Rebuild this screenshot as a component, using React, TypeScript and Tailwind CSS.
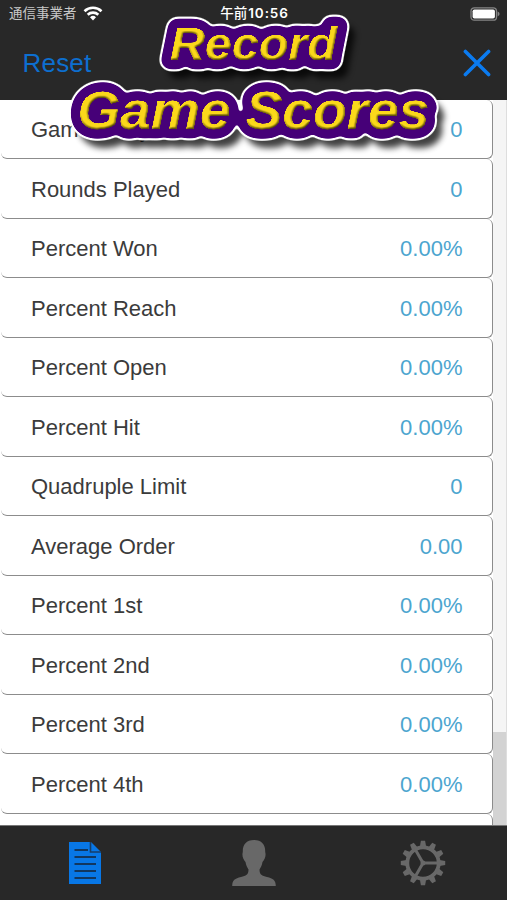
import React from "react";

const rows: [string, string][] = [
  ["Games Played", "0"],
  ["Rounds Played", "0"],
  ["Percent Won", "0.00%"],
  ["Percent Reach", "0.00%"],
  ["Percent Open", "0.00%"],
  ["Percent Hit", "0.00%"],
  ["Quadruple Limit", "0"],
  ["Average Order", "0.00"],
  ["Percent 1st", "0.00%"],
  ["Percent 2nd", "0.00%"],
  ["Percent 3rd", "0.00%"],
  ["Percent 4th", "0.00%"],
];

function StatusBar() {
  return (
    <div className="grid h-[27px] grid-cols-3 items-center pl-[9px] pr-[7px] font-['Inter','Noto_Sans_CJK_JP',sans-serif] text-[13.5px] leading-none text-white">
      <div className="flex items-center gap-[6px] whitespace-nowrap text-[#c8c8c8]">
        <span className="pt-[1px] text-[13.5px]">通信事業者</span>
        <svg width="20" height="15" viewBox="0 0 20 15" fill="none" stroke="#fff" strokeWidth="2.6">
          <path d="M1.5 5.2a12.3 12.3 0 0 1 17 0" />
          <path d="M4.7 8.7a7.7 7.7 0 0 1 10.6 0" />
          <path d="M10 14.4l-3-3.1a4.3 4.3 0 0 1 6 0z" fill="#fff" stroke="none" />
        </svg>
      </div>
      <div className="whitespace-nowrap pt-[1px] text-center font-medium">
        午前<span className="ml-[1px] font-semibold tracking-[0.9px]">10:56</span>
      </div>
      <svg className="justify-self-end" width="30" height="14" viewBox="0 0 30 14">
        <rect x="1" y="0.8" width="25.5" height="12.4" rx="3.3" fill="none" stroke="#858585" strokeWidth="1.3" />
        <rect x="2.6" y="2.4" width="22.3" height="9.2" rx="1.8" fill="#fff" />
        <path d="M27.6 4.6v4.8q2-1 2-2.4t-2-2.4" fill="#858585" />
      </svg>
    </div>
  );
}

function Banner() {
  return (
    <svg className="pointer-events-none absolute left-0 top-0 z-10" width="507" height="170" viewBox="0 0 507 170">
      <defs>
        <filter id="sticker" filterUnits="userSpaceOnUse" x="0" y="0" width="507" height="170" colorInterpolationFilters="sRGB">
          {/* drop shadow */}
          <feGaussianBlur in="SourceAlpha" stdDeviation="3.2" result="soft" />
          <feOffset in="soft" dx="7" dy="9" result="moved" />
          <feComponentTransfer in="moved" result="cast"><feFuncA type="linear" slope="0.75" /></feComponentTransfer>
          {/* thin white rim around a solid purple base */}
          <feGaussianBlur in="SourceAlpha" stdDeviation="2" result="spread" />
          <feColorMatrix in="spread" type="matrix" values="0 0 0 0 1  0 0 0 0 1  0 0 0 0 1  0 0 0 7 -0.85" result="rim" />
          <feColorMatrix in="spread" type="matrix" values="0 0 0 0 0.275  0 0 0 0 0  0 0 0 0 0.47  0 0 0 7 -3.2" result="base" />
          {/* raised yellow face */}
          <feColorMatrix in="SourceGraphic" type="matrix" values="0 0 0 0 1  0 0 0 0 0.86  0 0 0 0 0.1  0 1.15 0 0 0" result="flat" />
          <feGaussianBlur in="flat" stdDeviation="0.7" result="wide" />
          <feComponentTransfer in="wide" result="face"><feFuncA type="linear" slope="2.4" intercept="-0.4" /></feComponentTransfer>
          <feGaussianBlur in="face" stdDeviation="1.3" result="height" />
          <feDiffuseLighting in="height" surfaceScale="1.9" diffuseConstant="1.2" lightingColor="#fff" result="light">
            <feDistantLight azimuth="245" elevation="58" />
          </feDiffuseLighting>
          <feComposite in="face" in2="light" operator="arithmetic" k1="0.8" k2="0.18" result="lit" />
          <feComposite in="lit" in2="face" operator="in" result="top" />
          <feMerge>
            <feMergeNode in="cast" />
            <feMergeNode in="rim" />
            <feMergeNode in="base" />
            <feMergeNode in="top" />
          </feMerge>
        </filter>
      </defs>
      <g
        className="font-['Liberation_Sans',Arial,sans-serif] font-bold italic [paint-order:stroke]"
        fill="#ffdc1a"
        stroke="#460078"
        strokeWidth="19"
        strokeLinejoin="round"
      >
        <text x="170" y="60" fontSize="47" textLength="167" lengthAdjust="spacingAndGlyphs" filter="url(#sticker)">Record</text>
        <text x="77.5" y="128.5" fontSize="54.5" textLength="352" lengthAdjust="spacingAndGlyphs" filter="url(#sticker)">Game Scores</text>
      </g>
    </svg>
  );
}

function GearIcon() {
  return (
    <svg width="46" height="46" viewBox="-23 -23 46 46" fill="none" stroke="#686868">
      <circle r="15.7" strokeWidth="3.8" />
      {Array.from({ length: 12 }, (_, i) => (
        <path key={i} d="M-3.1 -16.5L-2.1 -22.2H2.1L3.1 -16.5Z" transform={`rotate(${i * 30})`} fill="#686868" stroke="none" />
      ))}
      <path d="M0 0H16M0 0L-8 -14M0 0L-8 14" strokeWidth="3" />
      <circle r="2.5" fill="#686868" stroke="none" />
    </svg>
  );
}

export default function App() {
  return (
    <div className="relative flex h-[900px] w-[507px] flex-col overflow-hidden bg-white font-['Liberation_Sans',Arial,sans-serif]">
      <header className="h-[99.5px] shrink-0 bg-[#282828]">
        <StatusBar />
        <div className="flex h-[72px] items-center justify-between pl-[22.5px] pr-4">
          <button className="text-[26px] leading-none tracking-[0.2px] text-[#0d6fd0]">Reset</button>
          <svg width="28" height="28" viewBox="0 0 28 28" stroke="#0b7bf0" strokeWidth="3.6" strokeLinecap="round">
            <path d="M2.4 2.4L25.6 25.6M25.6 2.4L2.4 25.6" />
          </svg>
        </div>
      </header>
      <Banner />
      <main className="flex min-h-0 flex-1 overflow-hidden">
        <ul className="w-[492.5px] shrink-0 pl-[1px]">
          {rows.map(([label, value]) => (
            <li
              key={label}
              className="flex h-[59.5px] items-center justify-between rounded-[6px] border-b-[1.5px] border-r-[1.5px] border-[#8c8c8c] bg-white pl-[30px] pr-[29px] pt-[1.5px] text-[22px]"
            >
              <span className="text-[#3b3b3b]">{label}</span>
              <span className="text-[#4ca5cf]">{value}</span>
            </li>
          ))}
          <li className="h-[59.5px] rounded-[6px] border-r-[1.5px] border-[#8c8c8c]" />
        </ul>
        <div className="flex-1 border-r border-[#dedede] bg-[#f5f5f5] pt-[632px]">
          <div className="h-[100px] bg-[#d3d3d3]" />
        </div>
      </main>
      <nav className="grid h-[75px] shrink-0 grid-cols-3 place-items-center border-t border-[#777] bg-[#282828]">
        <svg width="34" height="44" viewBox="0 0 34 44">
          <path d="M1 1H23L33 11V43H1Z" fill="#0877e6" />
          <path d="M22.5 1V11H33" fill="none" stroke="#173e68" strokeWidth="1.6" />
          <path d="M6.5 9H20M6.5 16H28M6.5 23H28M6.5 30H28M6.5 37H28" stroke="#12375f" strokeWidth="2" />
        </svg>
        <svg width="44" height="46" viewBox="0 0 44 46" fill="#686868">
          <path d="M22 0C14 0 10.5 5 10.8 12C9.6 16 11.5 20 13.5 22C14.2 26 15.7 28 16.5 29.5C16.5 35 14 35.7 9 37C3 38.5 .2 40 .2 46H43.8C43.8 40 41 38.5 35 37C30 35.7 27.5 35 27.5 29.5C28.3 28 29.8 26 30.5 22C32.5 20 34.4 16 33.2 12C33.5 5 30 0 22 0Z" />
        </svg>
        <GearIcon />
      </nav>
    </div>
  );
}
